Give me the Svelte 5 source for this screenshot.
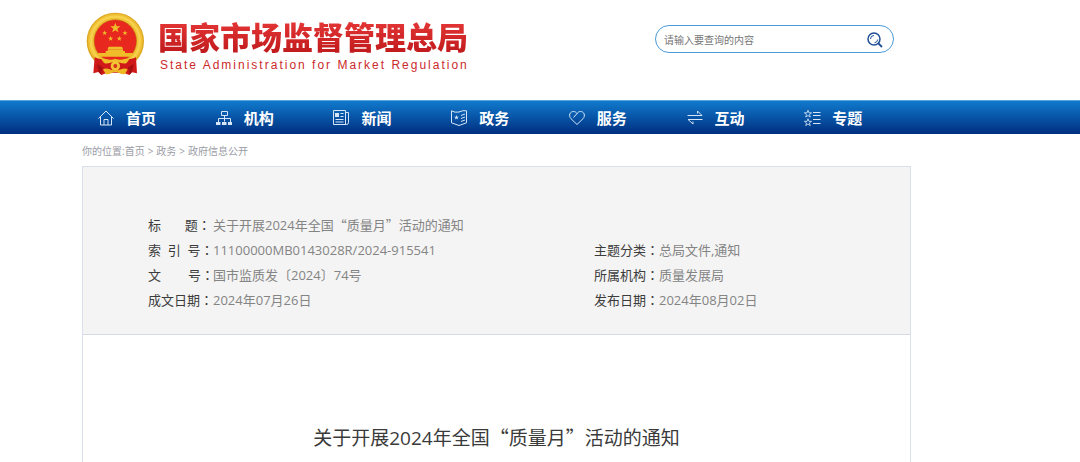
<script lang="ts">
    const nav = [
        { id: "home", label: "首页" },
        { id: "org", label: "机构" },
        { id: "news", label: "新闻" },
        { id: "affairs", label: "政务" },
        { id: "service", label: "服务" },
        { id: "interact", label: "互动" },
        { id: "topics", label: "专题" },
    ];

    const trail = ["首页", "政务", "政府信息公开"];

    const leftMeta = [
        { label: "索\u00a0\u00a0引\u00a0\u00a0号", value: "11100000MB0143028R/2024-915541" },
        { label: "文\u00a0\u00a0\u00a0\u00a0\u00a0\u00a0\u00a0\u00a0号", value: "国市监质发〔2024〕74号" },
        { label: "成文日期", value: "2024年07月26日" },
    ];

    const rightMeta = [
        { label: "主题分类", value: "总局文件,通知" },
        { label: "所属机构", value: "质量发展局" },
        { label: "发布日期", value: "2024年08月02日" },
    ];

    let query = $state("");
</script>

{#snippet star(x: number, y: number, r: number)}
    <path
        transform={`translate(${x} ${y}) scale(${r})`}
        d="M0-1 .24-.31.95-.31.38.12.59.81 0 .4-.59.81-.38.12-.95-.31-.24-.31Z"
    />
{/snippet}

{#snippet heading()}
    关于开展2024年全国<span class="cjk">“</span>质量月<span class="cjk">”</span>活动的通知
{/snippet}

<header class="top">
    <a class="brand" href="#home">
        <svg class="emblem" viewBox="30 20 180 192" aria-hidden="true">
            <circle cx="121" cy="108" r="86" fill="#dda823" />
            <circle cx="121" cy="107" r="82" fill="#f0c035" />
            <circle cx="121" cy="107" r="73" fill="none" stroke="#f7d24e" stroke-width="7" />
            <circle cx="121" cy="107" r="65" fill="#c98a18" />
            <circle cx="121" cy="107" r="63" fill="#e8281f" />
            <g fill="#f0bd2a">
                {@render star(121, 68, 16)}
                {@render star(89, 83, 8)}
                {@render star(150, 83, 8)}
                {@render star(107, 100, 8)}
                {@render star(133, 100, 8)}
                <path d="M101 124h40l3 7h-46ZM98 132h46v5h-46ZM92 137h58v7H92ZM68 143h106l-5 11H73Z" />
            </g>
            <path fill="#d01a1a" d="M59 156c14 6 24 6 36 8h52c12-2 22-2 36-8l3 48-15-3-8 8-18-7H97l-18 7-9-9-15 4Z" />
            <path fill="#a80f12" d="M66 176l5 24 8 8 4-22ZM176 176l-5 24-8 8-4-22Z" />
            <path fill="#f0be28" d="M78 160c15-2 23 8 43 0 20 8 28-2 43 0l-9 13c-12 5-22-4-34-3-12-1-22 8-34 3Z" />
            <circle cx="121" cy="182" r="14" fill="#f3c534" />
            <circle cx="121" cy="182" r="6" fill="#d7301c" />
            <path fill="#edb824" d="M84 192c13-8 22 5 37 2 15 3 24-10 37-2l-8 14c-11 4-17-6-29-6s-18 10-29 6Z" />
        </svg>
        <span class="brand-text">
            <span class="brand-cn">国家市场监督管理总局</span>
            <span class="brand-en">State Administration for Market Regulation</span>
        </span>
    </a>

    <form class="search" onsubmit={(e) => e.preventDefault()}>
        <input type="text" bind:value={query} placeholder="请输入要查询的内容" aria-label="请输入要查询的内容" />
        <button type="submit" aria-label="搜索">
            <svg viewBox="0 0 16 16" fill="none" stroke="#1f4f96">
                <circle cx="7" cy="7" r="6" stroke-width="1.5" />
                <path stroke-width="1" d="M3.5 7A3.5 3.5 0 0 1 7 3.5M7.5 10.8A4 4 0 0 0 10.8 7.5" />
                <path stroke-width="1.8" d="m11 11 4 4" />
            </svg>
        </button>
    </form>
</header>

<nav class="nav">
    <div class="nav-list">
        {#each nav as item (item.id)}
            <a href={`#${item.id}`}>
                <svg viewBox="0 0 16 16" fill="none" stroke="currentColor" stroke-width="1" aria-hidden="true">
                    {#if item.id === "home"}
                        <path d="M.5 8.5 8 1l7.5 7.5M2.5 7v8h11V7M6 15V9.5h4V15" />
                    {:else if item.id === "org"}
                        <path d="M5.5 1.500h6v4h-6ZM8.5 5.500v6M2.5 12V8.500h12V12" />
                        <path fill="currentColor" stroke="none" d="M0 12h4.500v3H0ZM6 12h4.500v3H6ZM12 12h4v3h-4Z" />
                    {:else if item.id === "news"}
                        <path d="M.5.5h12v14H.5ZM12.5 2.500h3v10q0 2-2 2h-2M7.500 3.500h3M7.500 6.500h3M2.500 9.500h8M2.500 12h8" />
                        <path fill="currentColor" stroke="none" d="M2 3h4v4H2Z" />
                    {:else if item.id === "affairs"}
                        <path d="M.5.8Q4 3 8 2q4-2 7.500-1.200v12L8 15.500.5 12.800ZM10 5.500l4-1.500M10 8.500l4-1.500M10 11.500l4-1.500" />
                        <g fill="currentColor" stroke="none">{@render star(5.5, 7.5, 2.6)}</g>
                    {:else if item.id === "service"}
                        <path d="M8 14.500 2 8.700C-.8 5.500 1 1.500 4.500 1.500 6.300 1.500 7.300 2.500 8 3.600 8.700 2.500 9.700 1.500 11.500 1.500 15 1.500 16.800 5.500 14 8.700ZM4.500 7.500 8 3.600" />
                    {:else if item.id === "interact"}
                        <path d="M.5 5.500h14.500l-4.500-4.500v2.500M15.500 9.500H1L6 14v-2.500" />
                    {:else}
                        <g stroke-width=".22">{@render star(4, 4, 3.8)}{@render star(4, 12.5, 3.8)}</g>
                        <path d="M9 2.500h7.500M9 5.500h7.500M9 9.500h7.500M9 13.500h7.500" />
                    {/if}
                </svg>
                {item.label}
            </a>
        {/each}
    </div>
</nav>

<main>
    <div class="trail">
        你的位置:{#each trail as step, i}{#if i > 0}<span class="sep">&gt;</span>{/if}<a href="#trail">{step}</a>{/each}
    </div>

    <article>
        <section class="meta">
            <dl class="wide">
                <div>
                    <dt>标&nbsp;&nbsp;&nbsp;&nbsp;&nbsp;&nbsp;&nbsp;题<span class="colon">：</span></dt>
                    <dd>{@render heading()}</dd>
                </div>
            </dl>
            {#each [leftMeta, rightMeta] as column}
                <dl>
                    {#each column as row}
                        <div>
                            <dt>{row.label}<span class="colon">：</span></dt>
                            <dd>{row.value}</dd>
                        </div>
                    {/each}
                </dl>
            {/each}
        </section>

        <h1>{@render heading()}</h1>
    </article>
</main>

<style>
    :global(body) {
        margin: 0;
        background: #fff;
        font-family: "Open Sans", "Noto Sans CJK SC", sans-serif;
    }

    a {
        color: inherit;
        text-decoration: none;
    }

    .top {
        display: flex;
        justify-content: space-between;
        align-items: flex-start;
        box-sizing: border-box;
        height: 100px;
        padding: 12px 186px 0 85px;
    }

    .brand {
        display: flex;
        gap: 13px;
    }

    .emblem {
        width: 60px;
        height: 64px;
    }

    .brand-text {
        display: flex;
        flex-direction: column;
        padding-top: 2px;
    }

    .brand-cn {
        font: 900 31px/44px "Noto Sans CJK SC", sans-serif;
        color: transparent;
        background: linear-gradient(#e23434 20%, #c01a1c 90%);
        background-clip: text;
    }

    .brand-en {
        padding-left: 2px;
        font: 12px/14px "Liberation Sans", sans-serif;
        letter-spacing: 2px;
        color: #cb2a2a;
    }

    .search {
        display: flex;
        align-items: center;
        box-sizing: border-box;
        width: 239px;
        height: 28px;
        margin-top: 13px;
        padding: 0 10px 0 8px;
        border: 1px solid #4a9bd9;
        border-radius: 14px;
    }

    .search input {
        flex: 1;
        min-width: 0;
        padding: 2px 0 0;
        border: 0;
        outline: 0;
        background: none;
        font: 10px/16px "Noto Sans CJK SC", sans-serif;
        color: #444;
    }

    .search input::placeholder {
        color: #757575;
    }

    .search button {
        display: flex;
        padding: 2px 0 0;
        border: 0;
        background: none;
    }

    .search svg {
        width: 16px;
        height: 16px;
    }

    .nav {
        box-sizing: border-box;
        height: 34px;
        padding: 0 174px 0 82px;
        border-top: 1px solid #5ba5dd;
        background: linear-gradient(#107acd, #002e7f);
    }

    .nav-list {
        display: grid;
        grid-template-columns: repeat(7, 1fr);
    }

    .nav a {
        display: flex;
        align-items: center;
        gap: 12px;
        padding-left: 16px;
        font: bold 15px/34px "Noto Sans CJK SC", sans-serif;
        color: #fff;
    }

    .nav svg {
        width: 16px;
        height: 16px;
        overflow: visible;
        color: #d6e6f7;
    }

    main {
        padding: 0 169px 0 82px;
    }

    .trail {
        padding: 9px 0 7px;
        font-size: 10px;
        line-height: 16px;
        color: #9a9ca6;
    }

    .sep {
        margin: 0 3px;
    }

    article {
        border: 1px solid #d9e0ec;
        border-bottom: 0;
    }

    .meta {
        display: grid;
        grid-template-columns: 446px 1fr;
        padding: 46px 0 21px 65px;
        border-bottom: 1px solid #d6dae2;
        background: #f4f4f4;
        font-size: 13px;
        line-height: 25px;
    }

    .meta .wide {
        grid-column: 1 / -1;
    }

    dl,
    dd {
        margin: 0;
    }

    dl div {
        display: grid;
        grid-template-columns: 65px 1fr;
    }

    dt {
        white-space: nowrap;
        color: #3c3c3c;
    }

    dd {
        color: #848484;
    }

    .colon,
    .cjk {
        line-height: 1;
    }

    .colon {
        font-family: "Noto Sans CJK TC", sans-serif;
    }

    .cjk {
        font-family: "Noto Sans CJK SC", sans-serif;
    }

    h1 {
        margin: 0;
        padding: 89px 0 10px;
        font-size: 19px;
        font-weight: 400;
        line-height: 28px;
        text-align: center;
        color: #3a3a3a;
    }
</style>
